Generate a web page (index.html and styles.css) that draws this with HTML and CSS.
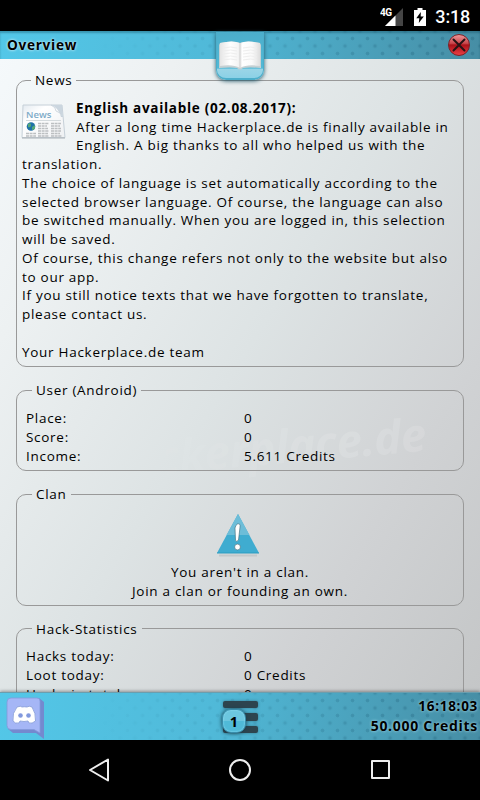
FILE: index.html
```
<!DOCTYPE html>
<html lang="en">
<head>
  <meta charset="UTF-8">
  <meta name="viewport" content="width=device-width, initial-scale=1.0">
  <title>Overview</title>
  <link rel="stylesheet" href="styles.css">
</head>
<body>
  <!-- Status bar -->
  <div class="status-bar">
    <svg class="signal" width="24" height="20" viewBox="0 0 24 20">
      <path d="M23 1V19H5z" fill="#454545"/>
      <path d="M15.500 8.500V19H5z" fill="#fff"/>
      <text x="0" y="9" class="network">4G</text>
    </svg>
    <svg class="battery" width="12" height="18" viewBox="0 0 12 18">
      <path d="M3.500 0h5v2H12v16H0V2h3.500z" fill="#fff"/>
      <path d="M6.800 4L2.300 10.300h3L4.800 15l5-6.500H6.700z" fill="#000"/>
    </svg>
    <span class="clock">3:18</span>
  </div>

  <!-- Title bar -->
  <header class="bar top-bar">
    <h1>Overview</h1>
    <div class="book-tab">
      <svg width="44" height="30" viewBox="0 0 44 30">
        <defs>
          <linearGradient id="page" x1="0" x2="1">
            <stop offset="0" stop-color="#e5e5e5"/>
            <stop offset=".25" stop-color="#fff"/>
            <stop offset=".46" stop-color="#f4f4f4"/>
            <stop offset=".5" stop-color="#d5d5d5"/>
            <stop offset=".55" stop-color="#fff"/>
            <stop offset=".8" stop-color="#fafafa"/>
            <stop offset="1" stop-color="#dedede"/>
          </linearGradient>
        </defs>
        <path d="M1 4L2 2Q15-1 22 2Q29-1 42 2L43 4V27Q31 26 25 27Q22 30 19 27Q13 26 1 27z" fill="#c6d0d3"/>
        <path d="M2 2Q15-1 22 2Q29-1 42 2V25Q29 23 22 27Q15 23 2 25z" fill="url(#page)"/>
        <path d="M5 7q8-2 14 0M5 10q8-2 14 0M5 13q8-2 14 0M5 16q8-2 14 0M5 19q8-2 14 0M25 7q8-2 14 0M25 10q8-2 14 0M25 13q8-2 14 0M25 16q8-2 14 0M25 19q8-2 14 0" stroke="#eee" fill="none"/>
      </svg>
    </div>
    <svg class="close" width="24" height="24" viewBox="0 0 24 24">
      <defs>
        <linearGradient id="red" x1="0" y1="0" x2="0" y2="1">
          <stop offset="0" stop-color="#f09a9c"/>
          <stop offset=".42" stop-color="#c9484d"/>
          <stop offset=".5" stop-color="#a91219"/>
          <stop offset="1" stop-color="#ee4146"/>
        </linearGradient>
      </defs>
      <circle cx="12" cy="12" r="10.500" fill="url(#red)" stroke="#7c2329"/>
      <path d="M6.500 6.500l11 11M17.500 6.500l-11 11" stroke="#281315" stroke-width="2" stroke-linecap="round"/>
    </svg>
  </header>

  <!-- Content -->
  <main class="content">
    <div class="watermark">Hackerplace.de</div>

    <fieldset class="news">
      <legend>News</legend>
      <svg class="news-icon" width="45" height="37" viewBox="0 0 45 37">
        <defs>
          <linearGradient id="paper" x1="0" y1="0" x2="1" y2="1">
            <stop offset="0" stop-color="#e3eaf0"/>
            <stop offset=".3" stop-color="#fff"/>
            <stop offset="1" stop-color="#eef0f2"/>
          </linearGradient>
        </defs>
        <path d="M2 2H41L44 34.500H1z" fill="url(#paper)" stroke="#c6d0d8"/>
        <path d="M1 35H44" stroke="#aab0b5"/>
        <path d="M30 2Q37 4 40 14L42 14L41 2z" fill="#cbd6df"/>
        <path d="M30 2Q35 4 35 8Q40 9 41 14" fill="#f8fafb" stroke="#bdc9d2" stroke-width=".7"/>
        <text x="5" y="15" class="news-word">News</text>
        <path d="M5 17.500H40" stroke="#d4dadd"/>
        <circle cx="10" cy="23.500" r="4.300" fill="#1e72a8"/>
        <path d="M7 21q3-2 3 1t-3 2zM11 24l3-2v4l-3 1z" fill="#55a879"/>
        <path d="M17 20.500h11M17 23h9M17 25.500h10M17 28h11M30 20.500h10M30 23h9M30 25.500h10M30 28h10M5 30.500h10M5 33h10M17 30.500h10M17 33h11M30 30.500h9M30 33h11" stroke="#bcbfc1" stroke-width="1.300" stroke-dasharray="3 .6"/>
      </svg>
      <b>English available (02.08.2017):</b><br>
      After a long time Hackerplace.de is finally available in English. A big thanks to all who helped us with the translation.<br>
      The choice of language is set automatically according to the selected browser language. Of course, the language can also be switched manually. When you are logged in, this selection will be saved.<br>
      Of course, this change refers not only to the website but also to our app.<br>
      If you still notice texts that we have forgotten to translate, please contact us.<br>
      <br>
      Your Hackerplace.de team
    </fieldset>

    <fieldset>
      <legend>User (Android)</legend>
      <dl>
        <dt>Place:</dt><dd>0</dd>
        <dt>Score:</dt><dd>0</dd>
        <dt>Income:</dt><dd>5.611 Credits</dd>
      </dl>
    </fieldset>

    <fieldset class="clan">
      <legend>Clan</legend>
      <svg width="44" height="44" viewBox="0 0 44 44">
        <path d="M22 1L43 40H1z" fill="#3facd0"/>
        <path d="M22 1L33.500 22H10.500z" fill="#6dbdd8"/>
        <path d="M1 40H43" stroke="#2b9cc0"/>
        <path d="M3 42.500H41" stroke="#c3c8ca" stroke-width="2"/>
        <path d="M21.500 11Q24.500 10 24 14L22.500 27Q20 30 19.500 27L19 15Q19.500 12 21.500 11z" fill="#fff" stroke="#3f6674" stroke-width=".6"/>
        <circle cx="21.500" cy="34" r="2.900" fill="#fff" stroke="#3f6674" stroke-width=".6"/>
      </svg>
      <p>You aren't in a clan.<br>Join a clan or founding an own.</p>
    </fieldset>

    <fieldset>
      <legend>Hack-Statistics</legend>
      <dl>
        <dt>Hacks today:</dt><dd>0</dd>
        <dt>Loot today:</dt><dd>0 Credits</dd>
        <dt>Hacks in total:</dt><dd>0</dd>
      </dl>
    </fieldset>
  </main>

  <!-- Game bar -->
  <footer class="bar bottom-bar">
    <svg class="discord" width="40" height="44" viewBox="0 0 40 44">
      <path d="M5 1H33L38 5V42L30 36H7L2 32V5z" fill="#7489cf"/>
      <path d="M5 1H31Q34 1 34 4V36L28 32.500H5Q1 32.500 1 28.500V5Q1 1 5 1z" fill="#a5b6f6" stroke="#8399db" stroke-width=".8"/>
      <path d="M11 10Q15 8.500 16 10Q18 9.500 21 10Q23 8.500 26 10Q30 16 29.500 24Q26 27 23 26L22 24Q18 25 14 24L13 26Q9 27 7 24Q6 16 11 10z" fill="#fff" stroke="#8399d5" stroke-width=".8"/>
      <circle cx="14.500" cy="18.500" r="2.300" fill="#8299de"/>
      <circle cx="22.500" cy="18.500" r="2.300" fill="#8299de"/>
    </svg>
    <div class="menu">
      <span class="line"></span>
      <span class="line"></span>
      <span class="line"></span>
      <span class="badge">1</span>
    </div>
    <div class="info">
      <div>16:18:03</div>
      <div class="credits">50.000 Credits</div>
    </div>
  </footer>

  <!-- Android navigation -->
  <nav class="nav-bar">
    <svg width="22" height="26" viewBox="0 0 22 26"><path d="M20 2.500V23.500L2 13z"/></svg>
    <svg width="24" height="24" viewBox="0 0 24 24"><circle cx="12" cy="12" r="10"/></svg>
    <svg width="22" height="22" viewBox="0 0 22 22"><path d="M2 2H19V19H2z"/></svg>
  </nav>
</body>
</html>
```
FILE: styles.css
```
* {
  box-sizing: border-box;
}

body {
  width: 480px;
  height: 800px;
  margin: 0;
  display: flex;
  flex-direction: column;
  overflow: hidden;
  background: #000;
  color: #000;
  font-family: "Open Sans", sans-serif;
  font-size: 13.5px;
  line-height: 18.75px;
  letter-spacing: 0.71px;
}

svg {
  display: block;
}

.status-bar {
  height: 31px;
  padding: 2px 10px 0 0;
  display: flex;
  flex: none;
  justify-content: flex-end;
  align-items: center;
  background: #000;
  color: #fff;
}

.network {
  font: bold 10px Roboto, sans-serif;
  letter-spacing: -0.5px;
  fill: #fff;
}

.signal {
  margin-right: 10px;
}

.battery {
  margin-right: 9px;
}

.clock {
  font: 500 18px Roboto, sans-serif;
  letter-spacing: -0.2px;
}

/* Blue bars with dotted pattern */
.bar {
  position: relative;
  display: flex;
  flex: none;
  justify-content: space-between;
  background: linear-gradient(100deg, #53c7e8 0%, #50b9d8 45%, #468da4 100%);
}

.bar::before {
  content: "";
  position: absolute;
  inset: 0;
  background-image:
    radial-gradient(circle, rgba(25, 85, 110, 0.25) 1.3px, transparent 2.3px),
    radial-gradient(circle, rgba(25, 85, 110, 0.25) 1.3px, transparent 2.3px);
  background-size: 15px 15px;
  background-position: 0 0, 7.5px 7.5px;
  -webkit-mask-image: linear-gradient(90deg, transparent 20%, #000 85%);
  mask-image: linear-gradient(90deg, transparent 20%, #000 85%);
}

.top-bar {
  z-index: 2;
  height: 28px;
  padding: 0 9px 0 7px;
  align-items: center;
  box-shadow: inset 0 2px 2px rgba(20, 80, 100, 0.4);
}

h1 {
  position: relative;
  margin: 0;
  font-size: 13.6px;
  font-weight: bold;
  text-shadow: 0 0 3px #fff;
}

.book-tab {
  position: absolute;
  top: 1px;
  left: 216px;
  width: 48px;
  height: 48px;
  padding: 9px 2px 0;
  border: 1px solid #4caeca;
  border-top: 0;
  border-bottom-width: 2px;
  border-radius: 0 0 10px 10px;
  background: linear-gradient(#4caecb 0, #52b9d6 79%, #9bd5e7 80%, #8bd1e6 100%);
  box-shadow: 0 1px 4px #26596a;
}

.book-tab svg {
  margin-left: -1px;
}

.close {
  position: relative;
}

.content {
  position: relative;
  flex: 1;
  min-height: 0;
  padding: 12px 16px 0;
  overflow: hidden;
  background: linear-gradient(122deg, #f5f9fb 0%, #edf1f2 20%, #dde3e4 49%, #d0d2d4 76%, #c4c6c7 100%);
}

.watermark {
  position: absolute;
  top: 358px;
  left: 98px;
  color: rgba(255, 255, 255, 0.13);
  font-size: 46px;
  font-weight: bold;
  font-style: italic;
  line-height: 60px;
  letter-spacing: -0.5px;
  transform: rotate(-5deg);
  -webkit-mask-image: linear-gradient(90deg, transparent 5%, #000 75%);
  mask-image: linear-gradient(90deg, transparent 5%, #000 75%);
}

fieldset {
  position: relative;
  margin: 0 0 14px;
  padding: 9px 6px 5px;
  border: 1px solid #999;
  border-radius: 10px;
}

legend {
  margin-left: 9px;
  padding: 0 4px;
}

.news {
  padding: 9px 5px 5px;
}

.news-icon {
  float: left;
  margin: 4px 10px 14px -1px;
}

.news-word {
  font: 600 9.5px "Open Sans", sans-serif;
  letter-spacing: 0;
  fill: #7eabc8;
}

dl {
  margin: 0;
  padding: 0 3px;
  display: grid;
  grid-template-columns: 218px 1fr;
}

dd {
  margin: 0;
}

.clan {
  padding-bottom: 4px;
}

.clan svg {
  margin: 0 auto 6px;
  position: relative;
  left: -2px;
}

.clan p {
  margin: 0;
  text-align: center;
}

.bottom-bar {
  height: 48px;
  padding: 4px 3px 0 6px;
  align-items: flex-start;
  border-top: 1px solid #6b9eae;
  box-shadow: 0 -1px 3px rgba(0, 0, 0, 0.35);
}

.discord {
  position: relative;
}

.menu {
  position: absolute;
  top: 8px;
  left: 223px;
  width: 35px;
  display: flex;
  flex-direction: column;
  gap: 5px;
}

.line {
  height: 7.4px;
  border-radius: 2px;
  background: #2d444e;
  box-shadow: 0 0 3px rgba(40, 80, 95, 0.6);
}

.badge {
  position: absolute;
  top: 8px;
  left: -1px;
  width: 24px;
  height: 24px;
  border: 1px solid #388caa;
  border-radius: 9px;
  background: linear-gradient(#6cc6df 50%, #50bad8 50%);
  box-shadow: 0 0 4px #173e4e, inset 0 0 2px #9ee6fa;
  font-size: 14.5px;
  font-weight: bold;
  line-height: 23px;
  letter-spacing: 0;
  text-align: center;
}

.info {
  position: relative;
  top: -1px;
  margin-right: -1px;
  font-weight: bold;
  line-height: 20px;
  text-align: right;
  text-shadow: 0 0 3px #b9e8f5;
}

.credits {
  font-size: 14px;
}

.nav-bar {
  height: 60px;
  display: flex;
  flex: none;
  justify-content: center;
  align-items: center;
  gap: 118px;
  background: #000;
}

.nav-bar svg {
  fill: none;
  stroke: #eee;
  stroke-width: 2;
  stroke-linejoin: round;
}
```
